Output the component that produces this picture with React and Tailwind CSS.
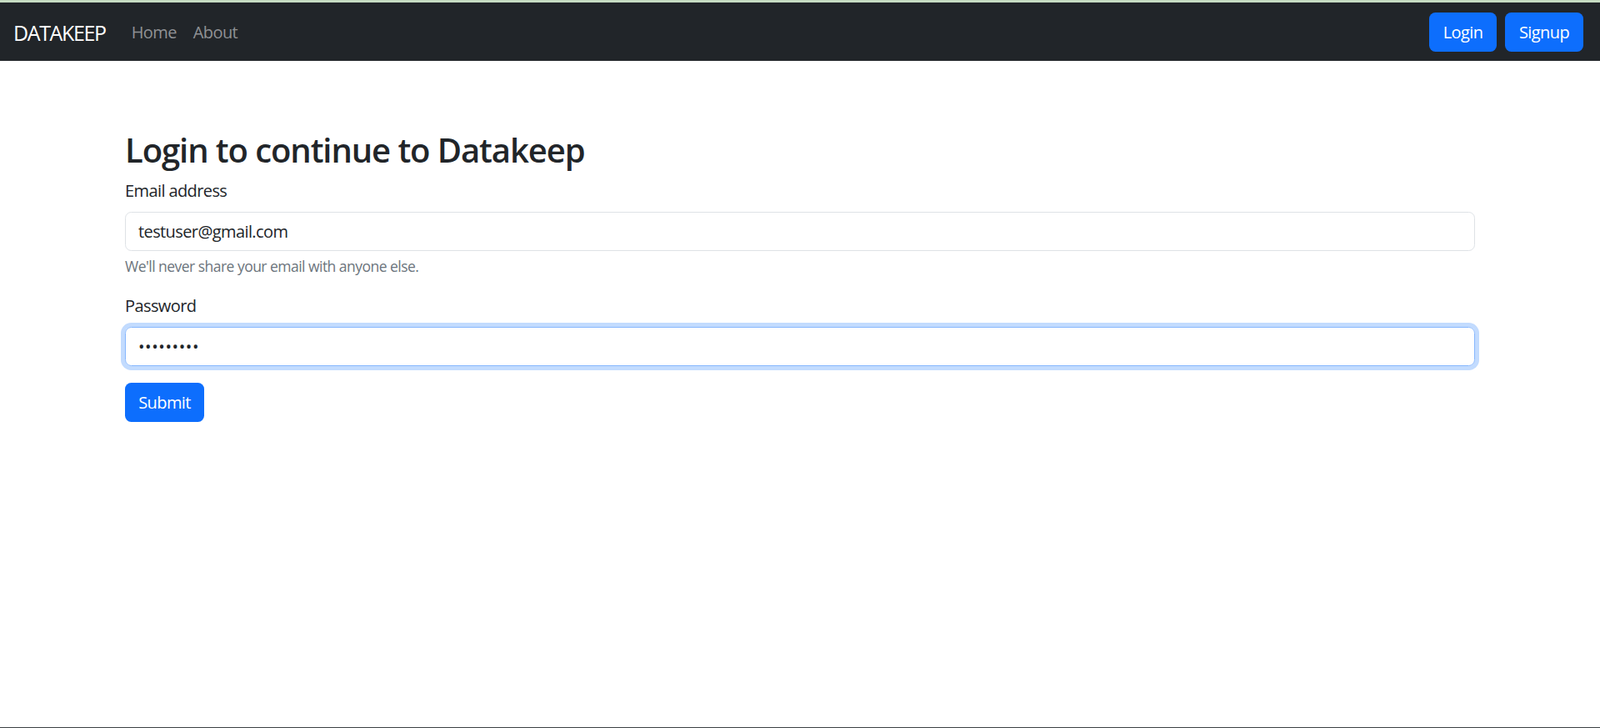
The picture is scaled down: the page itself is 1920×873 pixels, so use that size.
import React from "react";

export default function App() {
  return (
    <div
      className="h-[873px] flex flex-col bg-white text-[#212529]"
      style={{ fontFamily: '"Open Sans", "Noto Sans", sans-serif' }}
    >
      <div className="h-[3px] bg-[#c6dcc2]" />
      <nav className="h-[70px] bg-[#212529] flex items-center pl-[16px] pr-[20px]">
        <a className="text-[25px] leading-[38px] text-white tracking-[-0.055em] mt-[1px]">DATAKEEP</a>
        <div className="flex ml-[31px] gap-[20px] text-[20px] leading-[30px] text-[#8f9194] tracking-[-0.03em] mt-[2px]">
          <a>Home</a>
          <a>About</a>
        </div>
        <div className="ml-auto flex gap-[10px] mt-[1px]">
          <button className="w-[81px] h-[47px] rounded-[7.5px] bg-[#0d6efd] text-white text-[20px] tracking-[-0.03em] flex items-center justify-center">
            Login
          </button>
          <button className="w-[94px] h-[47px] rounded-[7.5px] bg-[#0d6efd] text-white text-[20px] tracking-[-0.03em] flex items-center justify-center">
            Signup
          </button>
        </div>
      </nav>
      <main className="flex-1">
        <div className="w-[1620px] mx-auto pt-[83px]">
          <h2 className="text-[40px] leading-[48px] font-semibold mb-[10px] tracking-[-0.027em]">
            Login to continue to Datakeep
          </h2>
          <div className="mb-[20px]">
            <label className="block text-[20px] leading-[30px] mb-[10px] tracking-[-0.03em]">
              Email address
            </label>
            <input
              type="email"
              readOnly
              defaultValue="testuser@gmail.com"
              className="block w-full h-[47px] px-[15px] text-[20px] text-[#212529] border border-[#dee2e6] rounded-[7.5px] outline-none tracking-[-0.03em]"
            />
            <div className="mt-[5px] text-[17.5px] leading-[26px] text-[#6c757d] tracking-[-0.03em]">
              We'll never share your email with anyone else.
            </div>
          </div>
          <div className="mb-[20px]">
            <label className="block text-[20px] leading-[30px] mb-[10px] tracking-[-0.03em]">
              Password
            </label>
            <input
              type="password"
              readOnly
              defaultValue="123456789"
              className="block w-full h-[47px] px-[15px] text-[20px] text-[#212529] tracking-[0.6px] border border-[#86b7fe] rounded-[7.5px] outline-none shadow-[0_0_0_5px_#c2dbfe]"
            />
          </div>
          <button className="w-[95px] h-[47px] rounded-[7.5px] bg-[#0d6efd] text-white text-[20px] tracking-[-0.03em] flex items-center justify-center">
            Submit
          </button>
        </div>
      </main>
      <div className="h-[1px] bg-[#3c4043]" />
    </div>
  );
}
